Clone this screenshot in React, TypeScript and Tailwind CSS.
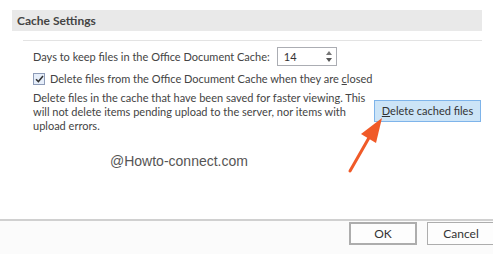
import React from 'react';

const font = { fontFamily: 'Lato, "Noto Sans", sans-serif' };

const App: React.FC = () => {
  return (
    <div
      className="relative w-[493px] h-[254px] overflow-hidden bg-white text-[#444] text-[11px] leading-[14px] flex flex-col"
      style={font}
    >
      {/* section header */}
      <div className="mt-[10px] ml-[12px] mr-[11px] h-[21px] bg-[#e9e9e9] flex items-center pl-[5px] font-bold text-[12px] text-[#444]">
        Cache Settings
      </div>
      <div className="mt-[9px] ml-[23px] mr-[11px] h-px bg-[#e3e3e3]" />

      {/* days to keep */}
      <div className="mt-[6px] ml-[33px] flex items-center whitespace-nowrap">
        <span>Days to keep files in the Office Document Cache:</span>
        <div className="ml-[7px] w-[60px] h-[19px] border border-[#abadb3] flex items-center justify-between pl-[6px] pr-[4px] text-[#333]">
          <span>14</span>
          <div className="flex flex-col gap-[3px]">
            <svg width="6" height="4" viewBox="0 0 6 4"><path d="M3 0L6 4H0z" fill="#777" /></svg>
            <svg width="6" height="4" viewBox="0 0 6 4"><path d="M0 0H6L3 4z" fill="#555" /></svg>
          </div>
        </div>
      </div>

      {/* checkbox */}
      <div className="mt-[6px] ml-[33px] flex items-center whitespace-nowrap">
        <div className="w-[12px] h-[12px] border border-[#8e9cb8] bg-[#e6eefa] flex items-center justify-center">
          <svg width="9" height="8" viewBox="0 0 9 8">
            <path d="M1 4.2L3.4 6.6L8 1" fill="none" stroke="#333" strokeWidth="1.5" />
          </svg>
        </div>
        <span className="ml-[5px]">
          Delete files from the Office Document Cache when they are <span className="underline">c</span>losed
        </span>
      </div>

      {/* description + button */}
      <div className="mt-[5px] ml-[33px] mr-[12px] flex items-start justify-between">
        <p className="whitespace-nowrap">
          Delete files in the cache that have been saved for faster viewing. This
          <br />
          will not delete items pending upload to the server, nor items with
          <br />
          upload errors.
        </p>
        <button className="mt-[9px] w-[107px] h-[22px] shrink-0 whitespace-nowrap bg-[#cce4f7] border border-[#7eb4ea] text-[#333] flex items-center justify-center">
          <span><span className="underline">D</span>elete cached files</span>
        </button>
      </div>

      {/* watermark */}
      <div
        className="mt-[19px] ml-[110px] text-[14px] leading-[18px] text-[#555]"
        style={{ fontFamily: '"Liberation Sans", Arial, sans-serif' }}
      >
        @Howto-connect.com
      </div>

      {/* footer */}
      <div className="mt-auto border-t-2 border-[#d0d0d0] bg-[#fbfbfb] h-[35px] flex items-start justify-end gap-[10px] pt-[1px] -mr-[2px] text-[12px]">
        <button className="w-[68px] h-[23px] border-2 border-[#adadad] bg-[#fdfdfd] text-[#333] flex items-center justify-center">
          OK
        </button>
        <button className="w-[68px] h-[23px] border border-[#adadad] bg-[#fdfdfd] text-[#333] flex items-center justify-center">
          Cancel
        </button>
      </div>

      {/* annotation arrow */}
      <svg className="absolute left-0 top-0 pointer-events-none" width="493" height="254">
        <line x1="350" y1="171" x2="370" y2="136" stroke="#f05a28" strokeWidth="3" strokeLinecap="round" />
        <path d="M382 118L361 134L376 143z" fill="#f05a28" />
      </svg>
    </div>
  );
};

export default App;
